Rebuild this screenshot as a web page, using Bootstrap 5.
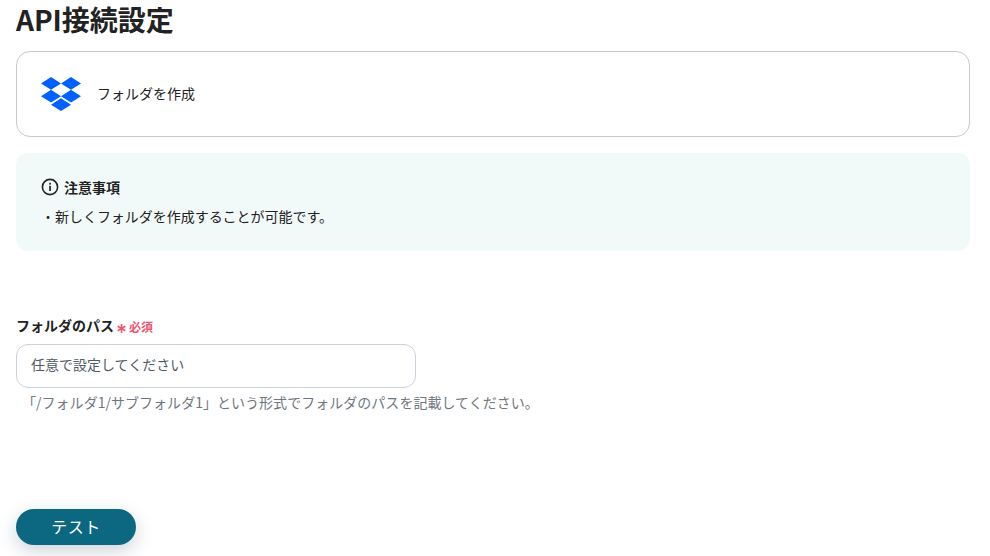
<!DOCTYPE html>
<html lang="ja">
<head>
<meta charset="utf-8">
<link href="https://cdn.jsdelivr.net/npm/bootstrap@5.3.0/dist/css/bootstrap.min.css" rel="stylesheet">
<style>
html,body{height:100%;overflow:hidden}
body{font-family:"Noto Sans CJK JP","Noto Sans",sans-serif;color:#222;background:#fff;font-size:14px}
.pagewrap{width:954px;margin-left:16px;height:556px}
.ttl{font-size:28px;font-weight:700;line-height:38px;height:38px;margin:0 0 13px;color:#222}
.appbox{height:86px;border:1px solid #c9c9c9;border-radius:14px;padding-left:24px;gap:16px;font-size:14px;margin-bottom:16px}
.appbox span{line-height:20px;margin-top:-3px}
.notebox{height:98px;background:#f2faf9;border-radius:12px;padding:24px 25px 0;margin-bottom:65px}
.notehead{font-size:14px;font-weight:700;gap:5px;line-height:20px;margin-bottom:9px}
.notetext{font-size:14px;line-height:20px;letter-spacing:-.03px}
.fieldlabel{font-size:14px;font-weight:700;line-height:20px;height:20px;margin-bottom:8px;gap:3px}
.labeltext{margin-top:-2px}
.req{color:#ee5670;font-size:12px;font-weight:700;margin-top:1px}
.field{width:400px;height:44px;border:1px solid #ccd2da;border-radius:12px;font-size:14px;color:#4f5a64;padding:0 14px 4px;box-shadow:none}
.field::placeholder{color:#4f5a64;opacity:1}
.hint{font-size:14px;color:#6f7780;line-height:20px;margin:4px 0 0;padding-left:6px;letter-spacing:.03px}
.gap{height:97px}
.testbtn{width:120px;height:36px;background:#0b6880;color:#fff;border:0;border-radius:18px;font-size:16px;letter-spacing:.5px;padding:0 0 2px;box-shadow:0 6px 18px rgba(30,60,80,.22);line-height:32px}
.testbtn:hover,.testbtn:focus{background:#0b6880;color:#fff}
</style>
</head>
<body>
<div class="pagewrap">
  <h1 class="ttl">API接続設定</h1>
  <div class="appbox d-flex align-items-center">
    <svg width="40" height="36" viewBox="0 0 40 36" aria-hidden="true"><path fill="#0061fe" d="M10 0 0 6.4l10 6.4 10-6.4zM30 0 20 6.4l10 6.4 10-6.4zM0 19.2l10 6.4 10-6.4-10-6.4zM30 12.8l-10 6.4 10 6.4 10-6.4zM10 27.7 20 34l10-6.3-10-6.4z" transform="translate(0 1)"/></svg>
    <span>フォルダを作成</span>
  </div>
  <div class="notebox">
    <div class="notehead d-flex align-items-center">
      <svg width="18" height="18" viewBox="0 0 18 18" aria-hidden="true"><circle cx="9" cy="9" r="7.6" fill="none" stroke="#222" stroke-width="1.6"/><rect x="8.2" y="7.8" width="1.7" height="5.2" fill="#222"/><rect x="8.2" y="4.8" width="1.7" height="1.8" fill="#222"/></svg>
      <span>注意事項</span>
    </div>
    <div class="notetext">・新しくフォルダを作成することが可能です。</div>
  </div>
  <label class="fieldlabel d-flex align-items-center" for="pathinput">
    <span class="labeltext">フォルダのパス</span>
    <svg width="9" height="9" viewBox="0 0 10 10" class="mt-1" aria-hidden="true"><path stroke="#ee5670" stroke-width="1.8" d="M5 0v10M.7 2.5l8.6 5M9.3 2.5l-8.6 5"/></svg>
    <span class="req">必須</span>
  </label>
  <input id="pathinput" class="form-control field" type="text" placeholder="任意で設定してください">
  <p class="hint">「/フォルダ1/サブフォルダ1」という形式でフォルダのパスを記載してください。</p>
  <div class="gap"></div>
  <button class="btn testbtn" type="button">テスト</button>
</div>
<script src="https://cdn.jsdelivr.net/npm/bootstrap@5.3.0/dist/js/bootstrap.bundle.min.js"></script>
</body>
</html>
